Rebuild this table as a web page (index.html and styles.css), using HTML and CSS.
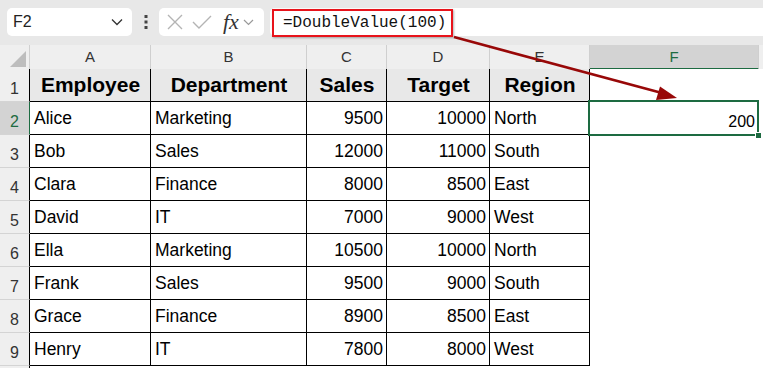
FILE: index.html
```html
<!DOCTYPE html>
<html lang="en">

<head>
    <meta charset="UTF-8">
    <meta name="viewport" content="width=device-width, initial-scale=1.0">
    <title>DoubleValue</title>
    <link rel="stylesheet" href="styles.css">
</head>

<body>
    <div class="toolbar">
        <div class="namebox">
            <span>F2</span>
            <svg width="12" height="8" viewBox="0 0 12 8"><polyline points="1,1.5 6,6.5 11,1.5" fill="none" stroke="#333" stroke-width="1.3"/></svg>
        </div>
        <div class="dots">
            <svg width="4" height="14" viewBox="0 0 4 14"><rect x="0.5" y="0" width="3" height="3" fill="#444"/><rect x="0.5" y="5.5" width="3" height="3" fill="#444"/><rect x="0.5" y="11" width="3" height="3" fill="#444"/></svg>
        </div>
        <div class="fxbox">
            <svg width="16" height="16" viewBox="0 0 16 16"><path d="M1 1 L15 15 M15 1 L1 15" stroke="#b4b4b4" stroke-width="1.4" fill="none"/></svg>
            <svg width="20" height="16" viewBox="0 0 20 16"><polyline points="1,8 7,14 19,2" stroke="#b4b4b4" stroke-width="1.4" fill="none"/></svg>
            <span class="fx">fx</span>
            <svg width="11" height="7" viewBox="0 0 11 7"><polyline points="1,1 5.5,5.5 10,1" fill="none" stroke="#999" stroke-width="1.2"/></svg>
        </div>
        <div class="formula">
            <div class="fbox">=DoubleValue(100)</div>
        </div>
    </div>

    <div class="sheet">
        <div class="row head">
            <div class="corner">
                <svg width="16" height="16" viewBox="0 0 16 16"><polygon points="16,0 16,16 0,16" fill="#bdbdbd"/></svg>
            </div>
            <div class="colh">A</div>
            <div class="colh">B</div>
            <div class="colh">C</div>
            <div class="colh">D</div>
            <div class="colh">E</div>
            <div class="colh active">F</div>
            <div class="colh rest"></div>
        </div>

        <div class="row">
            <div class="rowh">1</div>
            <div class="cell th">Employee</div>
            <div class="cell th">Department</div>
            <div class="cell th">Sales</div>
            <div class="cell th">Target</div>
            <div class="cell th">Region</div>
            <div class="blank"></div>
            <div class="blank"></div>
        </div>

        <div class="row">
            <div class="rowh active">2</div>
            <div class="cell">Alice</div>
            <div class="cell">Marketing</div>
            <div class="cell num">9500</div>
            <div class="cell num">10000</div>
            <div class="cell">North</div>
            <div class="blank picked">
                <span class="result">200</span>
                <div class="sel"></div>
                <div class="handle"></div>
            </div>
            <div class="blank"></div>
        </div>

        <div class="row">
            <div class="rowh">3</div>
            <div class="cell">Bob</div>
            <div class="cell">Sales</div>
            <div class="cell num">12000</div>
            <div class="cell num">11000</div>
            <div class="cell">South</div>
            <div class="blank"></div>
            <div class="blank"></div>
        </div>

        <div class="row">
            <div class="rowh">4</div>
            <div class="cell">Clara</div>
            <div class="cell">Finance</div>
            <div class="cell num">8000</div>
            <div class="cell num">8500</div>
            <div class="cell">East</div>
            <div class="blank"></div>
            <div class="blank"></div>
        </div>

        <div class="row">
            <div class="rowh">5</div>
            <div class="cell">David</div>
            <div class="cell">IT</div>
            <div class="cell num">7000</div>
            <div class="cell num">9000</div>
            <div class="cell">West</div>
            <div class="blank"></div>
            <div class="blank"></div>
        </div>

        <div class="row">
            <div class="rowh">6</div>
            <div class="cell">Ella</div>
            <div class="cell">Marketing</div>
            <div class="cell num">10500</div>
            <div class="cell num">10000</div>
            <div class="cell">North</div>
            <div class="blank"></div>
            <div class="blank"></div>
        </div>

        <div class="row">
            <div class="rowh">7</div>
            <div class="cell">Frank</div>
            <div class="cell">Sales</div>
            <div class="cell num">9500</div>
            <div class="cell num">9000</div>
            <div class="cell">South</div>
            <div class="blank"></div>
            <div class="blank"></div>
        </div>

        <div class="row">
            <div class="rowh">8</div>
            <div class="cell">Grace</div>
            <div class="cell">Finance</div>
            <div class="cell num">8900</div>
            <div class="cell num">8500</div>
            <div class="cell">East</div>
            <div class="blank"></div>
            <div class="blank"></div>
        </div>

        <div class="row">
            <div class="rowh">9</div>
            <div class="cell">Henry</div>
            <div class="cell">IT</div>
            <div class="cell num">7800</div>
            <div class="cell num">8000</div>
            <div class="cell">West</div>
            <div class="blank"></div>
            <div class="blank"></div>
        </div>

        <div class="row tail">
            <div class="rowh"></div>
        </div>
    </div>

    <!-- arrow from the formula to the result cell -->
    <svg class="arrow" width="763" height="368" viewBox="0 0 763 368">
        <line x1="454" y1="37" x2="662" y2="93" stroke="#980808" stroke-width="2.6"/>
        <polygon points="677,98 660,86.5 656,100" fill="#980808"/>
    </svg>
</body>

</html>
```

FILE: styles.css
```css
* {
    margin: 0;
    padding: 0;
    box-sizing: border-box;
}

body {
    width: 763px;
    height: 368px;
    overflow: hidden;
    position: relative;
    background: white;
    font-family: 'Liberation Sans', Arial, sans-serif;
    color: #000;
}

.toolbar {
    height: 45px;
    background: #e8e8e8;
    display: flex;
    align-items: flex-start;
    padding: 8px 0 0 7px;
}

.namebox {
    width: 125px;
    height: 28px;
    background: white;
    border-radius: 5px;
    display: flex;
    align-items: center;
    justify-content: space-between;
    padding: 0 9px 0 6px;
    font-size: 16px;
    color: #222;
}

.dots {
    width: 27px;
    height: 28px;
    display: flex;
    align-items: center;
    justify-content: center;
}

.fxbox {
    width: 105px;
    height: 28px;
    background: white;
    border-radius: 5px;
    display: flex;
    align-items: center;
    gap: 9px;
    padding-left: 8px;
}

.fx {
    font-family: 'Liberation Serif', 'Times New Roman', serif;
    font-style: italic;
    font-size: 22px;
    color: #333;
    margin-left: 2px;
    margin-right: -5px;
    line-height: 1;
}

.formula {
    flex: 1;
    height: 28px;
    margin-left: 6px;
    background: white;
    border-radius: 5px 0 0 5px;
    padding-left: 2px;
}

.fbox {
    width: 181px;
    height: 28px;
    margin-top: 1px;
    border: 2px solid #e8131b;
    box-shadow: 1px 1px 2px rgba(0, 0, 0, 0.3);
    font-family: 'Liberation Mono', 'Courier New', monospace;
    font-size: 16px;
    line-height: 24px;
    padding-left: 9px;
    color: #111;
    background: white;
}

.row {
    display: grid;
    grid-template-columns: 30px 121px 156px 80px 103px 100px 169px 4px;
    height: 33px;
}

.row.head {
    height: 24px;
}

.row.tail {
    height: 3px;
}

.corner {
    background: #efefef;
    border-right: 1px solid #d0d0d0;
    border-bottom: 1px solid #c8c8c8;
    display: flex;
    align-items: flex-end;
    justify-content: flex-end;
    padding: 0 3px 2px 0;
}

.colh {
    background: #efefef;
    border-right: 1px solid #cfcfcf;
    border-bottom: 1px solid #000;
    font-size: 15px;
    color: #333;
    text-align: center;
    line-height: 23px;
}

.colh.active {
    background: #d3d3d3;
    color: #1d6b41;
    border-bottom: 2px solid #1d6b41;
}

.colh.rest {
    border-right: none;
    border-bottom: 1px solid #c8c8c8;
}

.rowh {
    background: #efefef;
    border-right: 1px solid #000;
    border-bottom: 1px solid #d4d4d4;
    font-size: 16px;
    color: #333;
    display: flex;
    align-items: flex-end;
    justify-content: center;
    padding-bottom: 3px;
}

.rowh.active {
    background: #d3d3d3;
    color: #1d6b41;
    border-right: 1px solid #1d6b41;
}

.cell {
    border-right: 1px solid #000;
    border-bottom: 1px solid #000;
    font-size: 17.5px;
    display: flex;
    align-items: flex-end;
    padding: 0 3px 5px 4px;
    white-space: nowrap;
}

.cell.th {
    background: #e8e8e8;
    font-weight: bold;
    font-size: 21px;
    justify-content: center;
    padding-bottom: 4px;
}

.cell.num {
    justify-content: flex-end;
}

.blank {
    background: white;
}

.picked {
    position: relative;
    display: flex;
    align-items: flex-end;
    justify-content: flex-end;
    padding: 0 4px 4px 0;
}

.result {
    font-size: 16px;
}

.sel {
    position: absolute;
    top: -2px;
    left: -2px;
    right: 0;
    bottom: -1px;
    border: 2px solid #1d6b41;
}

.handle {
    position: absolute;
    right: -3px;
    bottom: -4px;
    width: 7px;
    height: 7px;
    background: #1d6b41;
    border: 1px solid white;
}

.arrow {
    position: absolute;
    left: 0;
    top: 0;
    pointer-events: none;
}
```
